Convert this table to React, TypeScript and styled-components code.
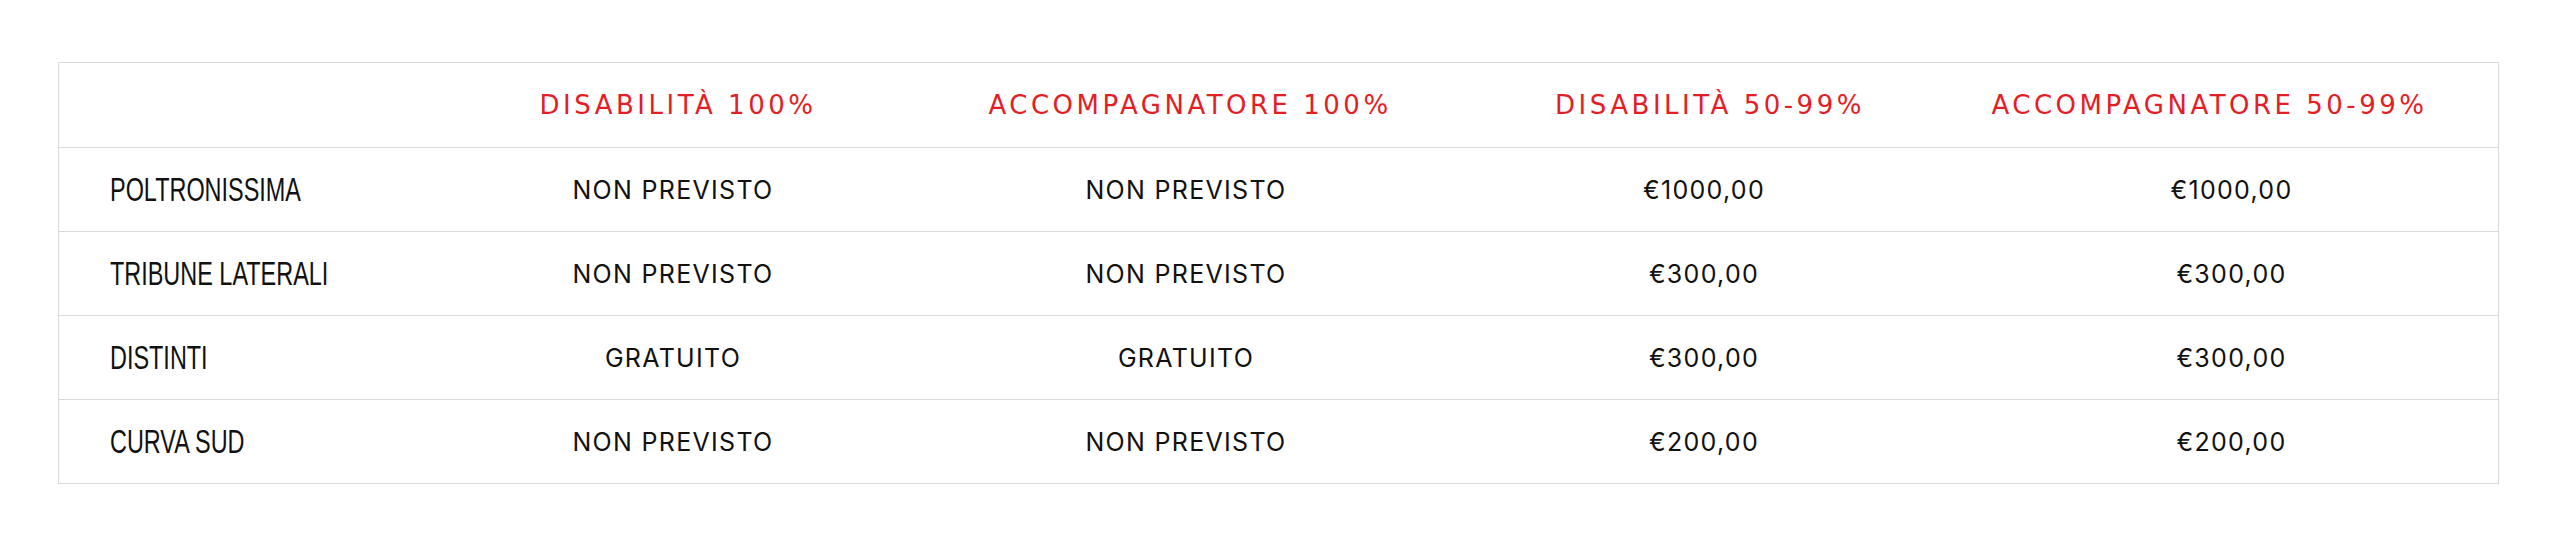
import styled, { createGlobalStyle } from 'styled-components';

const GlobalStyle = createGlobalStyle`
  html, body {
    margin: 0;
    padding: 0;
    background: #ffffff;
  }
  body {
    font-family: Inter, 'Noto Sans', sans-serif;
    color: #111111;
  }
`;

type PriceRow = {
  sector: string;
  prices: string[];
};

const headers = [
  'DISABILITÀ 100%',
  'ACCOMPAGNATORE 100%',
  'DISABILITÀ 50-99%',
  'ACCOMPAGNATORE 50-99%',
];

// small offsets so the headings sit where the original puts them
const headerNudge = [10, 8, 12, -44];

const rows: PriceRow[] = [
  {
    sector: 'POLTRONISSIMA',
    prices: ['NON PREVISTO', 'NON PREVISTO', '€1000,00', '€1000,00'],
  },
  {
    sector: 'TRIBUNE LATERALI',
    prices: ['NON PREVISTO', 'NON PREVISTO', '€300,00', '€300,00'],
  },
  {
    sector: 'DISTINTI',
    prices: ['GRATUITO', 'GRATUITO', '€300,00', '€300,00'],
  },
  {
    sector: 'CURVA SUD',
    prices: ['NON PREVISTO', 'NON PREVISTO', '€200,00', '€200,00'],
  },
];

const App = () => {
  return (
    <>
      <GlobalStyle />
      <PageWrapper>
        <PriceTable>
          <TableRow $head>
            <SectorCell />
            {headers.map((title, i) => (
              <HeadCell key={title} $nudge={headerNudge[i]}>
                {title}
              </HeadCell>
            ))}
          </TableRow>
          {rows.map((row) => (
            <TableRow key={row.sector}>
              <SectorCell>
                <SectorName>{row.sector}</SectorName>
              </SectorCell>
              {row.prices.map((price, i) => (
                <PriceCell key={i}>{price}</PriceCell>
              ))}
            </TableRow>
          ))}
        </PriceTable>
      </PageWrapper>
    </>
  );
};

const PageWrapper = styled.div`
  padding: 62px 61px 58px 58px;
`;
const PriceTable = styled.div`
  display: flex;
  flex-direction: column;
  border: 1px solid #d9d9d9;
  width: 2441px;
  box-sizing: border-box;
`;
const TableRow = styled.div<{ $head?: boolean }>`
  display: grid;
  grid-template-columns: 358px 512px 514px 522px 533px;
  align-items: center;
  height: ${({ $head }) => ($head ? '84px' : '83px')};
  border-top: ${({ $head }) => ($head ? 'none' : '1px solid #d9d9d9')};
`;
const SectorCell = styled.div`
  padding-left: 51px;
  white-space: nowrap;
`;
const SectorName = styled.span`
  display: inline-block;
  font-family: 'Liberation Sans', Arial, sans-serif;
  font-size: 33px;
  line-height: 1;
  color: #111111;
  transform: scaleX(0.71);
  transform-origin: left center;
`;
const HeadCell = styled.div<{ $nudge: number }>`
  text-align: center;
  padding-left: ${({ $nudge }) => ($nudge > 0 ? $nudge : 0)}px;
  padding-right: ${({ $nudge }) => ($nudge < 0 ? -$nudge : 0)}px;
  font-family: 'DejaVu Sans', sans-serif;
  font-weight: 400;
  font-size: 26px;
  letter-spacing: 3.5px;
  color: #e31e25;
  white-space: nowrap;
`;
const PriceCell = styled.div`
  text-align: center;
  font-family: Inter, 'Noto Sans', sans-serif;
  font-size: 25px;
  letter-spacing: 1.3px;
  color: #111111;
  white-space: nowrap;
`;

export default App;
